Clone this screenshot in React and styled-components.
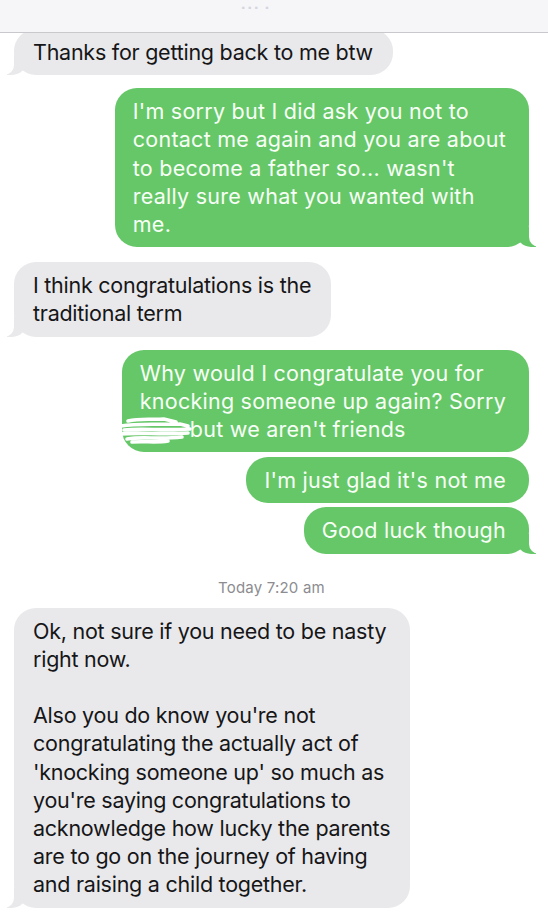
import styled, { createGlobalStyle, css } from 'styled-components';

const GREEN = '#66c768';
const GREY = '#e9e9eb';

const GlobalStyle = createGlobalStyle`
  html, body {
    margin: 0;
    padding: 0;
    background: #fff;
  }
  body {
    font-family: Inter, "Liberation Sans", Arial, sans-serif;
    -webkit-font-smoothing: antialiased;
  }
`;

const Screen = styled.div`
  position: relative;
  width: 548px;
  min-height: 918px;
  background: #fff;
  overflow: hidden;
`;

const TopBar = styled.div`
  position: absolute;
  top: 0;
  left: 0;
  right: 0;
  height: 32px;
  background: #f6f6f9;
  border-bottom: 1px solid #c9c9cd;
  z-index: 2;
  display: flex;
  justify-content: center;

  span {
    margin-top: 2px;
    margin-right: 36px;
    font-size: 8px;
    letter-spacing: 2px;
    color: #d4d5de;
  }
`;

const Thread = styled.div`
  display: flex;
  flex-direction: column;
  padding: 29px 19px 10px 14px;
`;

const tailLeft = css`
  &::before {
    content: '';
    position: absolute;
    bottom: 0;
    left: -7px;
    width: 20px;
    height: 20px;
    background: ${GREY};
    border-bottom-right-radius: 15px;
  }
  &::after {
    content: '';
    position: absolute;
    bottom: 0;
    left: -10px;
    width: 10px;
    height: 20px;
    background: #fff;
    border-bottom-right-radius: 10px;
  }
`;

const tailRight = css`
  &::before {
    content: '';
    position: absolute;
    bottom: 0;
    right: -7px;
    width: 20px;
    height: 20px;
    background: ${GREEN};
    border-bottom-left-radius: 15px;
  }
  &::after {
    content: '';
    position: absolute;
    bottom: 0;
    right: -10px;
    width: 10px;
    height: 20px;
    background: #fff;
    border-bottom-left-radius: 10px;
  }
`;

const Bubble = styled.div`
  position: relative;
  align-self: ${(p) => (p.$me ? 'flex-end' : 'flex-start')};
  margin-top: ${(p) => p.$gap || 0}px;
  padding: ${(p) => (p.$me ? '9px 23px 9px 18px' : '9px 20px 9px 19px')};
  border-radius: 22px;
  background: ${(p) => (p.$me ? GREEN : GREY)};
  color: ${(p) => (p.$me ? '#f7fff6' : '#161618')};
  font-size: 21.5px;
  line-height: 28.2px;
  letter-spacing: ${(p) => (p.$me ? '0.25px' : '-0.25px')};
  white-space: nowrap;
  ${(p) => p.$tail && (p.$me ? tailRight : tailLeft)}
`;

const Line = styled.div`
  min-height: 28.2px;
  position: relative;
  z-index: 1;
`;

const Redacted = styled.span`
  position: relative;
  display: inline-block;
  width: 50px;
  height: 20px;
  vertical-align: middle;

  svg {
    position: absolute;
    left: -22px;
    top: -7px;
  }
`;

const Stamp = styled.div`
  margin: 24px 0 10px;
  text-align: center;
  font-size: 15px;
  line-height: 20px;
  color: #8c8c91;
  letter-spacing: 0.2px;
`;

const Scribble = () => (
  <svg width="80" height="32" viewBox="0 0 80 32" fill="none">
    <path
      d="M10 7 C22 4 34 6 46 5 L58 8 M3 12 C20 9 40 11 62 10 L70 12 M6 16 C26 14 44 17 72 15 M2 20 C20 18 44 21 70 19 M9 25 C26 22 40 26 64 23 M14 28 C28 27 38 29 50 27"
      stroke="#fff"
      strokeWidth="3.6"
      strokeLinecap="round"
    />
  </svg>
);

const messages = [
  { me: false, tail: true, gap: 0, lines: ['Thanks for getting back to me btw'] },
  {
    me: true, tail: true, gap: 13,
    lines: [
      "I'm sorry but I did ask you not to",
      'contact me again and you are about',
      "to become a father so... wasn't",
      'really sure what you wanted with',
      'me.',
    ],
  },
  { me: false, tail: true, gap: 15, lines: ['I think congratulations is the', 'traditional term'] },
  {
    me: true, tail: false, gap: 13,
    lines: [
      'Why would I congratulate you for',
      'knocking someone up again? Sorry',
      <>
        <Redacted><Scribble /></Redacted>but we aren't friends
      </>,
    ],
  },
  { me: true, tail: false, gap: 5, lines: ["I'm just glad it's not me"] },
  { me: true, tail: true, gap: 4, lines: ['Good luck though'] },
];

const reply = [
  'Ok, not sure if you need to be nasty',
  'right now.',
  '',
  "Also you do know you're not",
  'congratulating the actually act of',
  "'knocking someone up' so much as",
  "you're saying congratulations to",
  'acknowledge how lucky the parents',
  'are to go on the journey of having',
  'and raising a child together.',
];

export default function App() {
  return (
    <Screen>
      <GlobalStyle />
      <TopBar>
        <span>▪▪▪ ▪</span>
      </TopBar>
      <Thread>
        {messages.map((m, i) => (
          <Bubble key={i} $me={m.me} $tail={m.tail} $gap={m.gap}>
            {m.lines.map((l, j) => (
              <Line key={j}>{l}</Line>
            ))}
          </Bubble>
        ))}
        <Stamp>Today 7:20 am</Stamp>
        <Bubble $tail>
          {reply.map((l, j) => (
            <Line key={j}>{l}</Line>
          ))}
        </Bubble>
      </Thread>
    </Screen>
  );
}
